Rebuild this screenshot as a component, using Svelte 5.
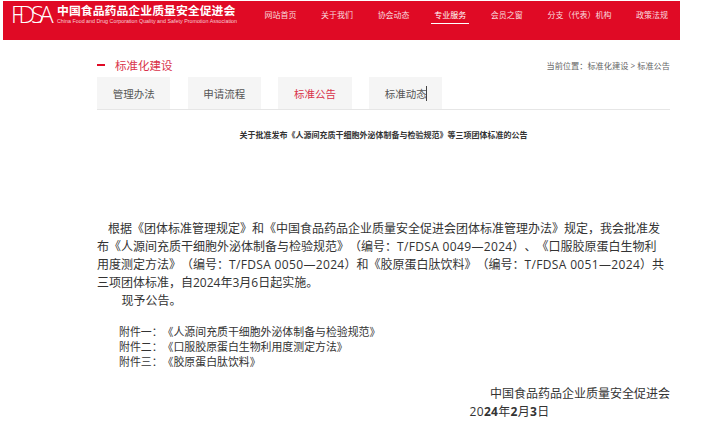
<script>
	const nav = ['网站首页', '关于我们', '协会动态', '专业服务', '会员之窗', '分支（代表）机构', '政策法规'];
	const tabs = ['管理办法', '申请流程', '标准公告', '标准动态'];
	const files = ['《人源间充质干细胞外泌体制备与检验规范》', '《口服胶原蛋白生物利用度测定方法》', '《胶原蛋白肽饮料》'];
	const nums = ['一', '二', '三'];
</script>

<div class="page">
	<header class="top">
		<div class="brand">
			<span class="logo">FDSA</span>
			<div class="brand-text">
				<div class="brand-cn">中国食品药品企业质量安全促进会</div>
				<div class="brand-en">China Food and Drug Corporation Quality and Safety Promotion Association</div>
			</div>
		</div>
		<nav class="nav">
			{#each nav as item}
				<span class="nav-item" class:active={item === '专业服务'}>{item}</span>
			{/each}
		</nav>
	</header>

	<main class="main">
		<div class="head">
			<h2 class="section-title"><i class="dash"></i>标准化建设</h2>
			<span class="crumb">当前位置：标准化建设 &gt; 标准公告</span>
		</div>
		<div class="tabs">
			{#each tabs as tab, i}
				<span class="tab" class:current={tab === '标准公告'}>{tab}{#if i === 3}<i class="caret"></i>{/if}</span>
			{/each}
		</div>

		<h1 class="notice-title">关于批准发布《人源间充质干细胞外泌体制备与检验规范》等三项团体标准的公告</h1>

		<div class="body">
			<p class="first">根据《团体标准管理规定》和《中国食品药品企业质量安全促进会团体标准管理办法》规定，我会批准发<br />布《人源间充质干细胞外泌体制备与检验规范》（编号：<span class="code">T/FDSA 0049—2024</span>）、《口服胶原蛋白生物利<br />用度测定方法》（编号：<span class="code">T/FDSA 0050—2024</span>）和《胶原蛋白肽饮料》（编号：<span class="code">T/FDSA 0051—2024</span>）共<br />三项团体标准，自2024年3月6日起实施。</p>
			<p class="announce">现予公告。</p>
		</div>

		<ul class="files">
			{#each files as f, i}
				<li>附件{nums[i]}：{f}</li>
			{/each}
		</ul>

		<div class="sign">
			<div>中国食品药品企业质量安全促进会</div>
			<div class="date">20<b>24</b>年<b>2</b>月<b>3</b>日</div>
		</div>
	</main>
</div>

<style>
	:global(body) {
		background: #fff;
	}

	.page {
		font-family: "Open Sans", "Noto Sans CJK SC", sans-serif;
		color: #333;
		height: 429px;
		overflow: hidden;
		padding-top: 1px;
		box-sizing: border-box;
		text-spacing-trim: space-all;
	}

	.top {
		margin: 0 44px 0 3px;
		height: 39px;
		background: #e00a25;
		color: #fff;
		display: flex;
		justify-content: space-between;
		padding: 0 9px 0 8px;
		box-sizing: border-box;
	}

	.brand {
		display: flex;
		padding-top: 3px;
	}

	.logo {
		flex: 0 0 46px;
		font-family: "Open Sans", sans-serif;
		font-weight: 300;
		font-size: 23.5px;
		line-height: 24px;
		height: 24px;
		margin-top: -2px;
		white-space: nowrap;
		letter-spacing: -4.2px;
		color: #fff;
	}

	.brand-cn {
		font-size: 11.9px;
		font-weight: 700;
		line-height: 13px;
		white-space: nowrap;
	}

	.brand-en {
		font-family: "Liberation Sans", sans-serif;
		font-size: 5.35px;
		line-height: 8px;
		white-space: nowrap;
		color: #f7cfd5;
	}

	.nav {
		display: flex;
		gap: 18.6px;
		font-size: 8px;
	}

	.nav-item {
		padding: 7px 3px 0;
		height: 23px;
		line-height: 14px;
		box-sizing: border-box;
		white-space: nowrap;
		color: #f9dadf;
	}

	.nav-item.active {
		border-bottom: 1px solid #fff;
		color: #fff;
	}

	.main {
		width: 573px;
		margin-left: 97px;
	}

	.head {
		display: flex;
		justify-content: space-between;
		align-items: center;
		height: 37px;
		padding-top: 12px;
		box-sizing: border-box;
	}

	.section-title {
		display: flex;
		align-items: center;
		margin: 0;
		font-size: 11.5px;
		font-weight: 400;
		color: #d9324a;
	}

	.dash {
		width: 8px;
		height: 2px;
		background: #e00a25;
		margin-right: 10px;
	}

	.crumb {
		font-size: 8.2px;
		color: #666;
		padding-top: 1px;
	}

	.tabs {
		display: flex;
		gap: 17.4px;
		height: 33px;
		border-bottom: 1px solid #e6e6e6;
		box-sizing: border-box;
	}

	.tab {
		width: 73.3px;
		background: #f5f5f5;
		font-size: 10.5px;
		line-height: 34px;
		text-align: center;
		color: #555;
		position: relative;
	}

	.tab.current {
		color: #d9324a;
	}

	.caret {
		position: absolute;
		left: 57px;
		top: 9px;
		width: 1px;
		height: 15px;
		background: #444;
	}

	.notice-title {
		margin: 17px 0 0;
		font-size: 8px;
		font-weight: 700;
		line-height: 15px;
		text-align: center;
		color: #333;
	}

	.body {
		margin-top: 78px;
		font-size: 12px;
		line-height: 18px;
		white-space: nowrap;
	}

	.body p {
		margin: 0;
	}

	.first {
		text-indent: 11px;
	}

	.code {
		letter-spacing: 0.34px;
	}

	.announce {
		padding-left: 24.5px;
	}

	.files {
		list-style: none;
		margin: 14px 0 0;
		padding: 0 0 0 22px;
		font-size: 10.9px;
		line-height: 15px;
		white-space: nowrap;
	}

	.sign {
		margin-top: 16px;
		font-size: 12px;
		line-height: 18px;
		text-align: right;
	}

	.date {
		padding-right: 120.5px;
		letter-spacing: 0.3px;
	}

	.date b {
		font-weight: 700;
	}
</style>
